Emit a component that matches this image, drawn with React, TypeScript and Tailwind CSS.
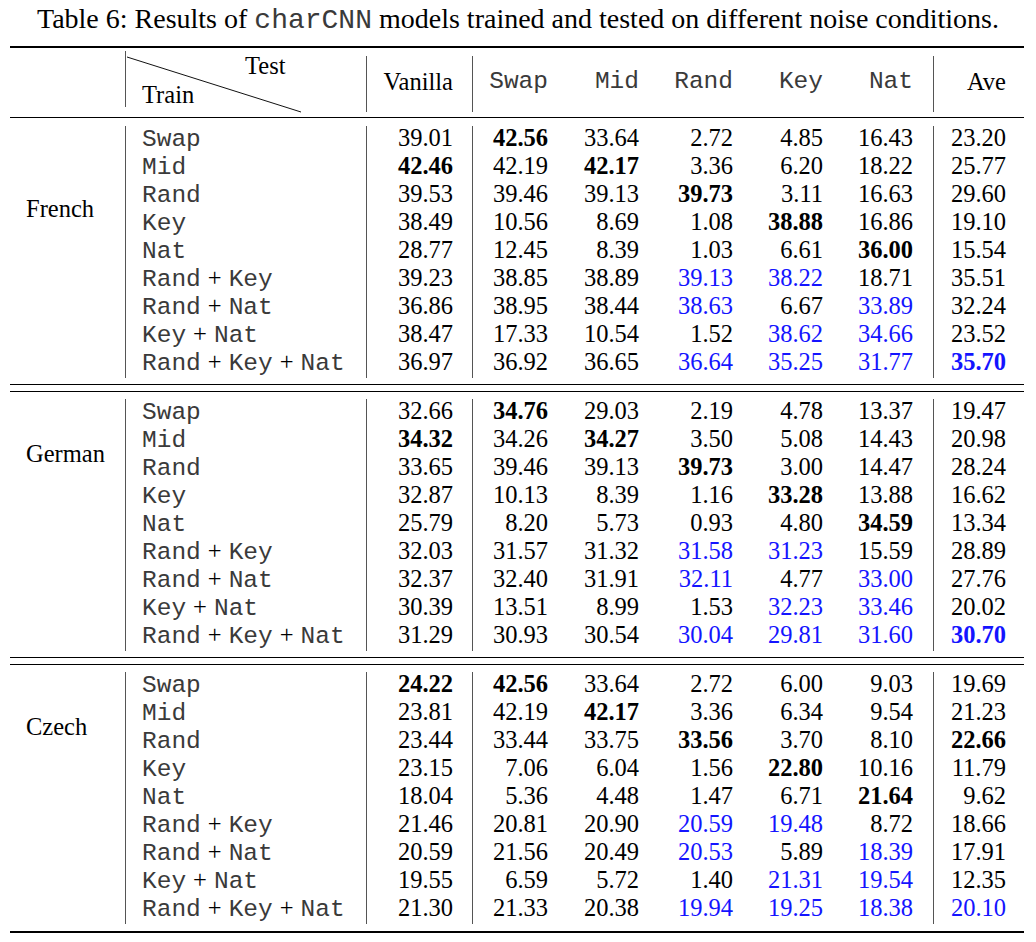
const serif = "font-['Liberation_Serif','Times_New_Roman',serif]"
const mono = "font-['Liberation_Mono','Courier_New',monospace] text-[#3a3a3a]"

// per-column classes (Vanilla .. Ave); width comes from the grid template
const cols = [
  "pr-[19px] border-l border-[#555]",
  "pr-[18px] border-l border-[#555]",
  "pr-[18px]",
  "pr-[18px]",
  "pr-[18px]",
  "pr-[20px]",
  "pr-[18px] border-l border-[#555]",
]

const grid = "grid grid-cols-[241px_106px_94px_91px_94px_90px_92px_91px]"

type Section = {
  lang: string
  span: string
  rows: [string, string[]][]
}

// "*" bold, "~" blue, "!" bold blue
const sections: Section[] = [
  {
    lang: "French",
    span: "h-[168px]",
    rows: [
      ["Swap", ["39.01", "*42.56", "33.64", "2.72", "4.85", "16.43", "23.20"]],
      ["Mid", ["*42.46", "42.19", "*42.17", "3.36", "6.20", "18.22", "25.77"]],
      ["Rand", ["39.53", "39.46", "39.13", "*39.73", "3.11", "16.63", "29.60"]],
      ["Key", ["38.49", "10.56", "8.69", "1.08", "*38.88", "16.86", "19.10"]],
      ["Nat", ["28.77", "12.45", "8.39", "1.03", "6.61", "*36.00", "15.54"]],
      ["Rand+Key", ["39.23", "38.85", "38.89", "~39.13", "~38.22", "18.71", "35.51"]],
      ["Rand+Nat", ["36.86", "38.95", "38.44", "~38.63", "6.67", "~33.89", "32.24"]],
      ["Key+Nat", ["38.47", "17.33", "10.54", "1.52", "~38.62", "~34.66", "23.52"]],
      ["Rand+Key+Nat", ["36.97", "36.92", "36.65", "~36.64", "~35.25", "~31.77", "!35.70"]],
    ],
  },
  {
    lang: "German",
    span: "h-[112px]",
    rows: [
      ["Swap", ["32.66", "*34.76", "29.03", "2.19", "4.78", "13.37", "19.47"]],
      ["Mid", ["*34.32", "34.26", "*34.27", "3.50", "5.08", "14.43", "20.98"]],
      ["Rand", ["33.65", "39.46", "39.13", "*39.73", "3.00", "14.47", "28.24"]],
      ["Key", ["32.87", "10.13", "8.39", "1.16", "*33.28", "13.88", "16.62"]],
      ["Nat", ["25.79", "8.20", "5.73", "0.93", "4.80", "*34.59", "13.34"]],
      ["Rand+Key", ["32.03", "31.57", "31.32", "~31.58", "~31.23", "15.59", "28.89"]],
      ["Rand+Nat", ["32.37", "32.40", "31.91", "~32.11", "4.77", "~33.00", "27.76"]],
      ["Key+Nat", ["30.39", "13.51", "8.99", "1.53", "~32.23", "~33.46", "20.02"]],
      ["Rand+Key+Nat", ["31.29", "30.93", "30.54", "~30.04", "~29.81", "~31.60", "!30.70"]],
    ],
  },
  {
    lang: "Czech",
    span: "h-[112px]",
    rows: [
      ["Swap", ["*24.22", "*42.56", "33.64", "2.72", "6.00", "9.03", "19.69"]],
      ["Mid", ["23.81", "42.19", "*42.17", "3.36", "6.34", "9.54", "21.23"]],
      ["Rand", ["23.44", "33.44", "33.75", "*33.56", "3.70", "8.10", "*22.66"]],
      ["Key", ["23.15", "7.06", "6.04", "1.56", "*22.80", "10.16", "11.79"]],
      ["Nat", ["18.04", "5.36", "4.48", "1.47", "6.71", "*21.64", "9.62"]],
      ["Rand+Key", ["21.46", "20.81", "20.90", "~20.59", "~19.48", "8.72", "18.66"]],
      ["Rand+Nat", ["20.59", "21.56", "20.49", "~20.53", "5.89", "~18.39", "17.91"]],
      ["Key+Nat", ["19.55", "6.59", "5.72", "1.40", "~21.31", "~19.54", "12.35"]],
      ["Rand+Key+Nat", ["21.30", "21.33", "20.38", "~19.94", "~19.25", "~18.38", "~20.10"]],
    ],
  },
]

function TrainLabel({ name }: { name: string }) {
  const parts = name.split("+")
  return (
    <span className="whitespace-nowrap">
      {parts.map((p, i) => (
        <span key={i}>
          {i > 0 && <span className={`${serif} mx-[7px]`}>+</span>}
          <span className={mono}>{p}</span>
        </span>
      ))}
    </span>
  )
}

function Num({ v }: { v: string }) {
  const flag = v[0]
  if (flag === "*") return <span className="font-bold">{v.slice(1)}</span>
  if (flag === "~") return <span className="text-[#1414ff]">{v.slice(1)}</span>
  if (flag === "!") return <span className="font-bold text-[#1414ff]">{v.slice(1)}</span>
  return <span>{v}</span>
}

function Body({ s }: { s: Section }) {
  return (
    <div className="flex leading-[24px]">
      <div className="w-[115px] shrink-0">
        <div className={`${s.span} flex items-center pl-[16px] pb-[3px]`}>{s.lang}</div>
      </div>
      <div className={grid}>
        {s.rows.map(([name, vals]) => (
          <div key={name} className="contents">
            <div className="h-[28px] border-l border-[#555] pl-[16px]">
              <TrainLabel name={name} />
            </div>
            {vals.map((v, i) => (
              <div key={i} className={`h-[28px] text-right ${cols[i]}`}>
                <Num v={v} />
              </div>
            ))}
          </div>
        ))}
      </div>
    </div>
  )
}

function Header() {
  const heads = ["Swap", "Mid", "Rand", "Key", "Nat"]
  return (
    <div className="flex h-[69px]">
      <div className="w-[115px] shrink-0" />
      <div className={grid}>
        <div className="relative">
          <div className="mt-[8px] h-[56px] border-l border-[#555]">
            <div className="-mt-[5px] leading-[29px]">
              <div className="pl-[119px]">Test</div>
              <div className="pl-[16px]">Train</div>
            </div>
          </div>
          <svg className="absolute inset-0" width="241" height="69">
            <line x1="2" y1="9" x2="176" y2="64" stroke="#111" strokeWidth="1" />
          </svg>
        </div>
        <div className={`mt-[8px] h-[56px] flex items-center justify-end pb-[4px] ${cols[0]}`}>Vanilla</div>
        {heads.map((h, i) => (
          <div key={h} className={`mt-[8px] h-[56px] flex items-center justify-end pb-[4px] ${mono} ${cols[i + 1]}`}>
            {h}
          </div>
        ))}
        <div className={`mt-[8px] h-[56px] flex items-center justify-end pb-[4px] ${cols[6]}`}>Ave</div>
      </div>
    </div>
  )
}

export default function App() {
  return (
    <div className={`w-[1036px] h-[942px] bg-white text-black ${serif}`}>
      <div className="pt-[2px] text-center text-[28px] leading-[34px]">
        Table 6: Results of <span className={mono}>charCNN</span> models trained and tested on different noise
        conditions.
      </div>
      <div className="ml-[10px] mt-[8px] w-[1014px] text-[24.5px] leading-[28px]">
        <div className="h-[2px] bg-black" />
        <Header />
        <div className="h-px bg-black" />
        <div className="pt-[8px] pb-[6px]">
          <Body s={sections[0]} />
        </div>
        <div className="h-px bg-black" />
        <div className="h-[6px]" />
        <div className="h-px bg-black" />
        <div className="pt-[7px] pb-[6px]">
          <Body s={sections[1]} />
        </div>
        <div className="h-px bg-black" />
        <div className="h-[6px]" />
        <div className="h-px bg-black" />
        <div className="pt-[7px] pb-[7px]">
          <Body s={sections[2]} />
        </div>
        <div className="h-[2px] bg-black" />
      </div>
    </div>
  )
}
